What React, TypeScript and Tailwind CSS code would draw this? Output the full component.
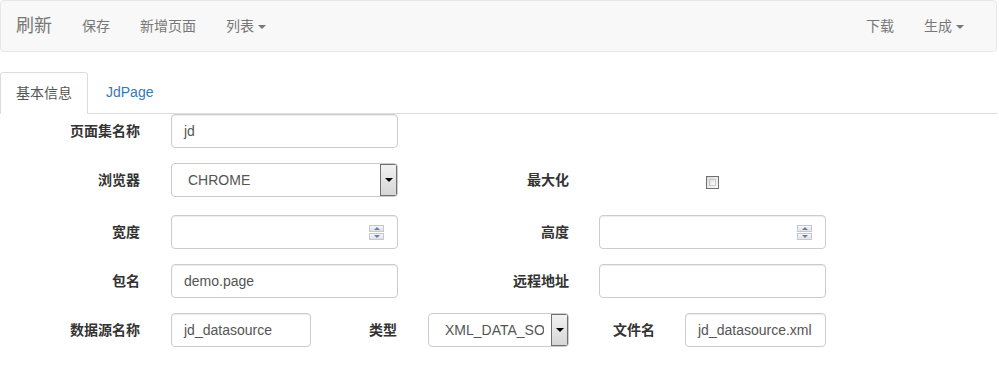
import React from 'react';

const font = { fontFamily: '"Liberation Sans", "Noto Sans CJK SC", sans-serif' };

function Caret() {
  return <span className="ml-[4px] inline-block h-0 w-0 border-x-[4px] border-t-[4px] border-x-transparent border-t-[#777] align-middle" />;
}

function Label({ text, width }: { text: string; width: string }) {
  return <div className={`${width} shrink-0 text-right text-[14px] font-bold text-[#333]`}>{text}</div>;
}

function TextInput({ value, width, spinner, gap = 'ml-[31px]' }: { value?: string; width: string; spinner?: boolean; gap?: string }) {
  return (
    <div className={`relative ${width} ${gap} h-[34px] shrink-0 rounded-[4px] border border-[#ccc] bg-white shadow-[inset_0_1px_1px_rgba(0,0,0,0.075)]`}>
      <div className="px-[12px] text-[14px] leading-[32px] text-[#555]">{value}</div>
      {spinner && (
        <div className="absolute right-[13px] top-[9px] flex w-[15px] flex-col gap-px">
          <div className="flex h-[7px] items-center justify-center border border-[#c4c8d2] bg-gradient-to-b from-[#f6f6f6] to-[#e2e2e2]">
            <span className="h-0 w-0 border-x-[3px] border-b-[3px] border-x-transparent border-b-[#6c7ca8]" />
          </div>
          <div className="flex h-[7px] items-center justify-center border border-[#c4c8d2] bg-gradient-to-b from-[#f6f6f6] to-[#e2e2e2]">
            <span className="h-0 w-0 border-x-[3px] border-t-[3px] border-x-transparent border-t-[#6c7ca8]" />
          </div>
        </div>
      )}
    </div>
  );
}

function Select({ value, width }: { value: string; width: string }) {
  return (
    <div className={`relative ${width} ml-[31px] h-[34px] shrink-0 overflow-hidden rounded-[4px] border border-[#ccc] bg-white`}>
      <div className="ml-[16px] mr-[24px] overflow-hidden whitespace-nowrap text-[14px] leading-[32px] text-[#555]">{value}</div>
      <div className="absolute bottom-0 right-0 top-0 flex w-[17px] items-center justify-center border border-[#707070] bg-gradient-to-b from-[#f2f2f2] to-[#d6d6d6]">
        <span className="h-0 w-0 border-x-[4px] border-t-[4px] border-x-transparent border-t-black" />
      </div>
    </div>
  );
}

export default function App() {
  return (
    <div className="h-[371px] w-[999px] overflow-hidden bg-white" style={font}>
      <div className="w-[997px]">
        <nav className="flex h-[52px] items-center justify-between rounded-[4px] border border-[#e7e7e7] bg-[#f8f8f8] text-[14px] text-[#777]">
          <div className="flex items-center">
            <span className="px-[15px] text-[18px]">刷新</span>
            <span className="px-[15px]">保存</span>
            <span className="px-[15px]">新增页面</span>
            <span className="px-[15px]">列表<Caret /></span>
          </div>
          <div className="flex items-center pr-[17px]">
            <span className="px-[15px]">下载</span>
            <span className="px-[15px]">生成<Caret /></span>
          </div>
        </nav>

        <div className="mt-[20px] flex h-[42px] border-b border-[#ddd] text-[14px]">
          <div className="mb-[-1px] flex h-[42px] w-[88px] items-center justify-center rounded-t-[4px] border border-b-0 border-[#ddd] bg-white text-[#555]">
            基本信息
          </div>
          <div className="flex items-center px-[18px] text-[#337ab7]">JdPage</div>
        </div>

        <div className="flex flex-col gap-[15px]">
          <div className="flex items-center">
            <Label text="页面集名称" width="w-[140px]" />
            <TextInput value="jd" width="w-[227px]" />
          </div>
          <div className="mb-[3px] flex items-center">
            <Label text="浏览器" width="w-[140px]" />
            <Select value="CHROME" width="w-[227px]" />
            <Label text="最大化" width="w-[171px]" />
            <div className="ml-[137px] mt-[5px] h-[13px] w-[13px] border border-[#707070] bg-gradient-to-br from-[#dcdcdc] to-[#fbfbfb] p-[2px]">
              <div className="h-full w-full border border-[#c8c8c8] bg-gradient-to-br from-[#e0e0e0] to-white" />
            </div>
          </div>
          <div className="flex items-center">
            <Label text="宽度" width="w-[140px]" />
            <TextInput width="w-[227px]" spinner />
            <Label text="高度" width="w-[171px]" />
            <TextInput width="w-[227px]" spinner gap="ml-[30px]" />
          </div>
          <div className="flex items-center">
            <Label text="包名" width="w-[140px]" />
            <TextInput value="demo.page" width="w-[227px]" />
            <Label text="远程地址" width="w-[171px]" />
            <TextInput width="w-[227px]" gap="ml-[30px]" />
          </div>
          <div className="flex items-center">
            <Label text="数据源名称" width="w-[140px]" />
            <TextInput value="jd_datasource" width="w-[140px]" />
            <Label text="类型" width="w-[86px]" />
            <Select value="XML_DATA_SOURCE" width="w-[141px]" />
            <Label text="文件名" width="w-[86px]" />
            <TextInput value="jd_datasource.xml" width="w-[141px]" gap="ml-[30px]" />
          </div>
        </div>
      </div>
    </div>
  );
}
